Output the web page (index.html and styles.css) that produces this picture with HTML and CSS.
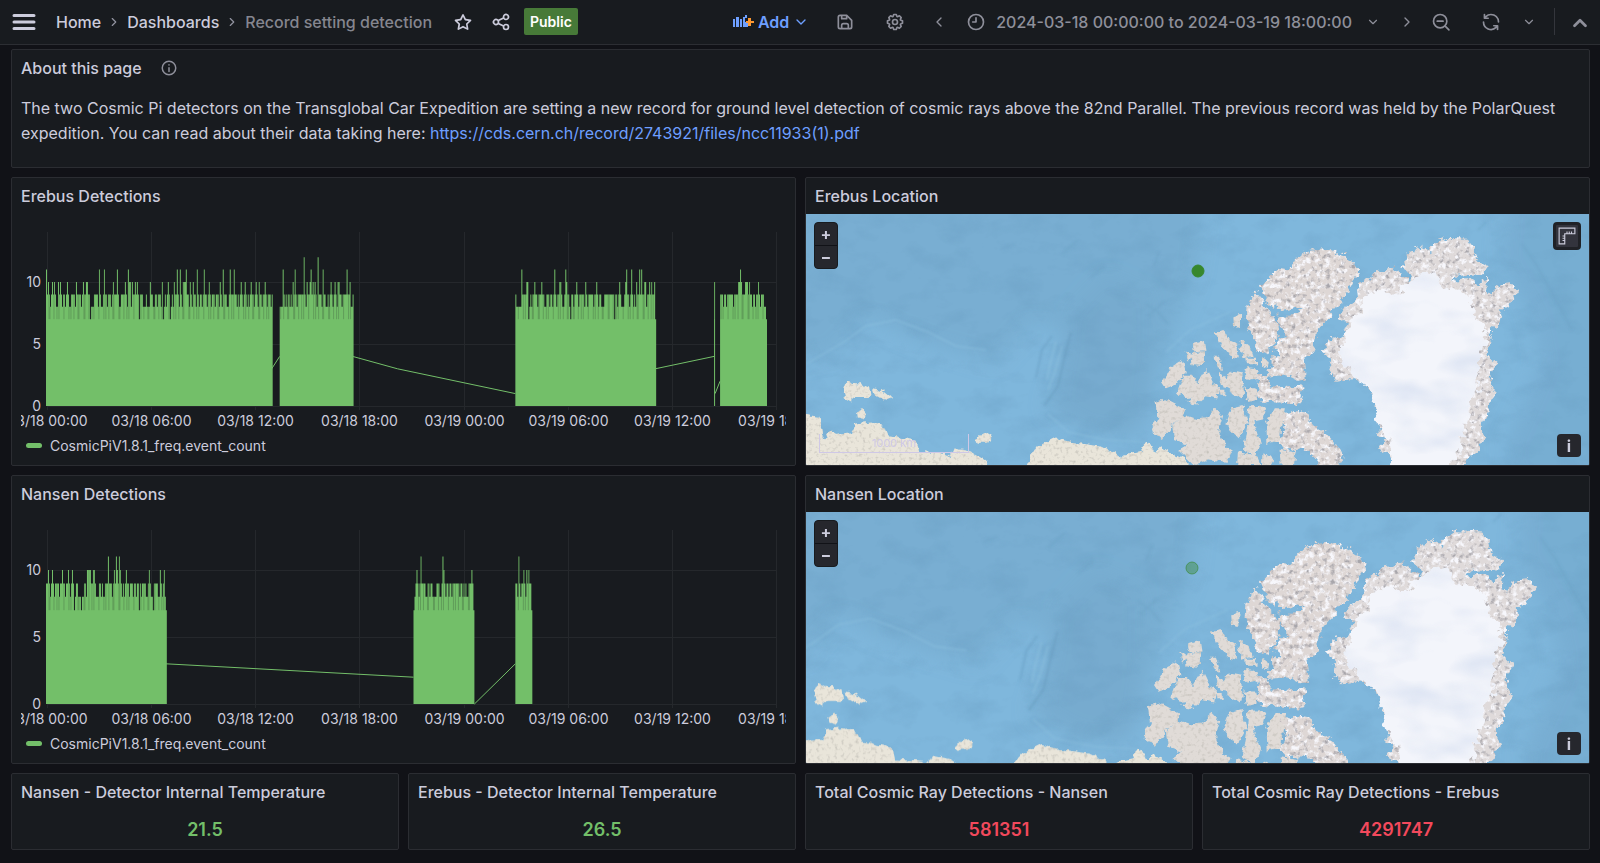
FILE: index.html
```html
<!DOCTYPE html>
<html lang="en">
<head>
    <meta charset="UTF-8">
    <meta name="viewport" content="width=device-width, initial-scale=1.0">
    <title>Record setting detection - Dashboards</title>
    <link rel="stylesheet" href="styles.css">
</head>
<body>

    <!-- Shared icons and map drawing -->
    <svg class="defs" width="0" height="0" aria-hidden="true">
        <defs>
            <symbol id="icon-right" viewBox="0 0 24 24"><path class="line" d="M9 6l6 6-6 6"/></symbol>
            <symbol id="icon-left" viewBox="0 0 24 24"><path class="line" d="M15 6l-6 6 6 6"/></symbol>
            <symbol id="icon-down" viewBox="0 0 24 24"><path class="line" d="M6 9l6 6 6-6"/></symbol>
            <symbol id="icon-up" viewBox="0 0 24 24"><path class="line thick" d="M6 16l6-6 6 6"/></symbol>
            <symbol id="icon-info" viewBox="0 0 24 24"><circle class="line" cx="12" cy="12" r="9"/><path class="line" d="M12 11.500v5M12 7.500v.6"/></symbol>

            <filter id="coast" x="0" y="-10" width="783" height="280" filterUnits="userSpaceOnUse" color-interpolation-filters="sRGB">
                <feTurbulence type="fractalNoise" baseFrequency="0.16" numOctaves="2" seed="4" result="wobble"/>
                <feDisplacementMap in="SourceGraphic" in2="wobble" scale="7" xChannelSelector="R" yChannelSelector="G" result="land"/>
                <feTurbulence type="fractalNoise" baseFrequency="0.3" numOctaves="2" seed="9"/>
                <feColorMatrix values="0 0 0 0 .74  0 0 0 0 .73  0 0 0 0 .70  0 2 0 0 -1.050" result="grain"/>
                <feComposite in="grain" in2="land" operator="in" result="shade"/>
                <feMerge><feMergeNode in="land"/><feMergeNode in="shade"/></feMerge>
            </filter>
            <filter id="rock" x="0" y="-10" width="783" height="280" filterUnits="userSpaceOnUse" color-interpolation-filters="sRGB">
                <feTurbulence type="fractalNoise" baseFrequency="0.16" numOctaves="3" seed="7" result="wobble"/>
                <feDisplacementMap in="SourceGraphic" in2="wobble" scale="10" xChannelSelector="R" yChannelSelector="G" result="land"/>
                <feTurbulence type="fractalNoise" baseFrequency="0.2" numOctaves="3" seed="2" result="noise"/>
                <feColorMatrix in="noise" values="0 0 0 0 .66  0 0 0 0 .65  0 0 0 0 .67  0 3.500 0 0 -1.900" result="dark"/>
                <feColorMatrix in="noise" values="0 0 0 0 .97  0 0 0 0 .97  0 0 0 0 .99  4 0 0 0 -1.900" result="snow"/>
                <feComposite in="snow" in2="land" operator="in" result="snowland"/>
                <feComposite in="dark" in2="land" operator="in" result="darkland"/>
                <feMerge><feMergeNode in="land"/><feMergeNode in="snowland"/><feMergeNode in="darkland"/></feMerge>
            </filter>
            <filter id="icecap" x="400" y="-10" width="383" height="280" filterUnits="userSpaceOnUse" color-interpolation-filters="sRGB">
                <feTurbulence type="fractalNoise" baseFrequency="0.12" numOctaves="3" seed="3" result="wobble"/>
                <feDisplacementMap in="SourceGraphic" in2="wobble" scale="14" xChannelSelector="R" yChannelSelector="G" result="ice"/>
                <feTurbulence type="fractalNoise" baseFrequency="0.015 0.03" numOctaves="3" seed="5"/>
                <feColorMatrix values="0 0 0 0 .86  0 0 0 0 .89  0 0 0 0 .95  0 2.400 0 0 -1.050" result="haze"/>
                <feComposite in="haze" in2="ice" operator="in" result="shade"/>
                <feMerge><feMergeNode in="ice"/><feMergeNode in="shade"/></feMerge>
            </filter>
            <filter id="seabed" x="-20" y="-20" width="823" height="300" filterUnits="userSpaceOnUse" color-interpolation-filters="sRGB">
                <feTurbulence type="fractalNoise" baseFrequency="0.03 0.05" numOctaves="4" seed="11"/>
                <feColorMatrix values="0 0 0 0 .40  0 0 0 0 .60  0 0 0 0 .74  0 1.600 0 0 -.75"/>
                <feComposite in2="SourceGraphic" operator="in"/>
            </filter>
            <filter id="soft" x="-30%" y="-30%" width="160%" height="160%"><feGaussianBlur stdDeviation="9"/></filter>
            <filter id="softline" x="-30%" y="-30%" width="160%" height="160%"><feGaussianBlur stdDeviation="1"/></filter>

            <g id="arctic">
                <rect x="-10" y="-10" width="803" height="280" fill="#7fb7dc"/>
                <g filter="url(#soft)" fill="#77abcf">
                    <path d="M-20-20H400L390 60 355 150 335 200 325 222 285 220 240 195 265 120 225 110 190 150 120 130 60 104 30 140-20 150Z" opacity=".75"/>
                    <path d="M262 100L300 60 345 80 345 190 330 220 280 215 245 195Z"/>
                    <path d="M700-20H803V270H705L700 230 735 150 725 100 695 50Z" opacity=".8"/>
                </g>
                <rect x="-10" y="-10" width="803" height="280" fill="#000" filter="url(#seabed)" opacity=".4"/>
                <g filter="url(#softline)" fill="none" stroke-width="2">
                    <path d="M0 150L38 128 60 112 90 106 122 118 150 132 180 136" stroke="#8bc0e0" opacity=".5"/>
                    <path d="M265 118L257 150 252 172 238 192" stroke="#6599bc" opacity=".5"/>
                    <path d="M246 122L236 136 230 164" stroke="#6599bc" opacity=".4"/>
                    <path d="M250 128L244 150 241 166M256 132L249 158 242 176" stroke="#8fc3e2" opacity=".5"/>
                    <path d="M340 90L352 98 362 110M342 102l16-14M256 40l16-14M284 64l14-12M195 34l14-4M348 52l5-14" stroke="#6c9fc2" opacity=".4"/>
                    <path d="M242 200L262 218 300 226 340 228M360 138l24-22 40-18" stroke="#8bc0e0" opacity=".5"/>
                    <path d="M716 30l14 20 20 36 16 30M680 8l-8 8" stroke="#6c9fc2" opacity=".4"/>
                </g>

                <!-- Siberian and Alaskan coast -->
                <g filter="url(#coast)" fill="#e9e5da" stroke="#e9e5da" stroke-width="6">
                    <g transform="translate(-5 -43) scale(.3333)">
                        <path d="M-20 730L50 740 60 790 70 812 90 780 100 795 155 790 165 760 210 755 250 770 260 795 345 812 352 845 430 852 448 862 460 835 510 845 550 870 570 900H-20Z"/>
                        <path d="M130 660L140 632 160 640 180 640 205 650 208 675 165 675 150 688 135 680Z"/>
                        <path d="M220 656L240 660 265 680 250 686 225 672Z"/>
                        <path d="M168 722l15-7 12 15-5 12-20-5z"/>
                        <path d="M530 800L550 788 567 800 560 812 535 812Z"/>
                        <path d="M670 900L690 860 710 830 765 803 810 815 900 830 940 850 960 865 1000 850 1035 845 1045 820 1060 850 1090 838 1150 865 1175 900Z"/>
                    </g>
                </g>

                <!-- Canadian islands -->
                <g filter="url(#coast)" fill="#e0dbd7" stroke="#e0dbd7" stroke-width="6">
                    <g transform="translate(323 -4) scale(.3333)">
                        <path d="M316 322l14-4v32l-12-4zM262 370L285 366 300 395 322 405 326 442 305 437 275 400ZM335 393L355 403 367 435 343 442ZM355 446h26v14h-24zM402 450l14 8-2 14-12-4zM260 443l8 0 10 32-8-2zM195 405L225 396 229 420 198 424ZM190 434L222 428 222 462 193 460ZM173 430l12 10-6 8z"/>
                        <path d="M100 517L130 475 160 455 167 485 140 520 110 532Z"/>
                        <path d="M148 547L165 500 187 500 205 525 232 483 250 520 267 530 263 562 230 555 195 582 178 572 198 555 170 558Z"/>
                        <path d="M273 488L290 513 310 488 337 493 342 552 315 558 303 532 283 530ZM353 538L377 538 382 566 360 572ZM350 478L378 480 384 500 358 507ZM272 542h14v12h-12z"/>
                        <path d="M83 578L110 570 167 600 160 617 130 642 100 687 70 662 88 625Z"/>
                        <path d="M133 650L165 618 200 630 233 625 262 600 276 618 265 660 280 700 310 722 290 752 240 745 195 762 153 722 180 702 138 687Z"/>
                        <path d="M293 640L310 598 342 590 350 640 330 678 308 662ZM363 592L409 590 402 625 373 632 376 655 392 700 375 737 348 717 360 650ZM415 640L438 598 464 598 455 640 450 690 418 697Z"/>
                        <path d="M330 728l27 5v34h-30zM363 738l14-6 14 33h-30zM403 735l29 15-10 17h-20zM455 723L497 730 492 765 458 765Z"/>
                        <path d="M-20 740L40 728 50 700 65 727 85 732 100 716 150 746 180 780H-20Z" fill="#e9e5da" stroke="#e9e5da"/>
                    </g>
                </g>
                <g filter="url(#rock)" fill="#ded7d5" stroke="#ded7d5" stroke-width="6">
                    <g transform="translate(323 -4) scale(.3333)">
                        <path d="M400 230L430 200 455 178 485 185 500 150 540 125 600 120 640 135 665 155 690 185 665 215 650 245 620 290 590 325 560 360 560 385 550 425 520 440 527 502 500 506 470 492 420 497 415 480 435 470 433 440 455 445 440 420 450 390 480 380 450 345 450 320 485 320 520 300 500 290 460 300 430 285 410 265Z"/>
                        <path d="M356 290L378 248 400 275 410 300 440 330 445 370 435 400 410 432 385 417 375 375 353 335Z"/>
                        <path d="M383 498L410 498 425 533 470 530 517 535 513 577 430 574 388 567 395 540Z"/>
                        <path d="M460 615L500 603 535 608 545 640 590 672 620 706 637 740 625 770 580 770 555 740 520 710 470 725 453 690 470 650Z"/>
                    </g>
                </g>

                <!-- Greenland -->
                <g filter="url(#rock)" fill="#dfdada" stroke="#dfdada" stroke-width="4">
                    <g transform="translate(493 -4) scale(.3333)">
                        <path d="M72 425L95 390 135 378 150 340 120 322 140 290 185 262 182 225 215 200 240 188 280 178 300 185 325 215 345 200 312 175 330 130 365 112 395 130 400 98 440 85 500 88 520 115 530 150 558 165 555 190 470 195 455 215 500 210 545 225 562 205 560 245 575 255 610 225 640 222 655 245 630 285 600 300 608 320 590 350 578 345 575 400 560 440 590 465 570 500 575 520 590 550 570 575 565 610 545 640 555 690 535 700 540 720 510 740 470 790 275 790 280 740 245 720 250 690 280 690 240 670 245 640 235 600 225 560 200 515 160 505 110 510 90 480 100 450Z"/>
                    </g>
                </g>
                <g filter="url(#icecap)" fill="#f3f5fb" stroke="#f3f5fb" stroke-width="14" stroke-linejoin="round">
                    <g transform="translate(493 -4) scale(.3333)">
                        <path d="M345 215L370 195 410 205 440 240 500 260 520 310 540 340 560 375 540 430 525 480 535 530 500 590 490 650 480 710 430 790H290L280 700 240 620 228 560 208 520 180 500 138 460 130 420 145 375 160 335 200 310 190 270 240 250 300 255 340 220Z"/>
                    </g>
                </g>
            </g>
        </defs>
    </svg>

    <!-- Top navigation -->
    <header class="topbar">
        <button class="icon-button menu" aria-label="Open menu">
            <svg width="24" height="24" viewBox="0 0 24 24"><path class="line thick" d="M2 5.500h20M2 12h20M2 18.500h20"/></svg>
        </button>
        <nav class="breadcrumbs" aria-label="Breadcrumbs">
            <a href="#">Home</a>
            <svg class="sep" width="14" height="14"><use href="#icon-right"/></svg>
            <a href="#">Dashboards</a>
            <svg class="sep" width="14" height="14"><use href="#icon-right"/></svg>
            <span class="current">Record setting detection</span>
        </nav>
        <button class="icon-button light" aria-label="Mark as favorite">
            <svg width="20" height="20" viewBox="0 0 24 24"><path d="M22,9.67A1,1,0,0,0,21.14,9l-5.69-.83L12.9,3a1,1,0,0,0-1.8,0L8.55,8.16,2.86,9a1,1,0,0,0-.81.68,1,1,0,0,0,.25,1l4.13,4-1,5.68A1,1,0,0,0,6.9,21.44L12,18.77l5.1,2.67a.93.93,0,0,0,.46.12,1,1,0,0,0,.59-.19,1,1,0,0,0,.4-1l-1-5.68,4.13-4A1,1,0,0,0,22,9.67Zm-6.15,4a1,1,0,0,0-.29.88l.72,4.2-3.76-2a1.06,1.06,0,0,0-.94,0l-3.76,2,.72-4.2a1,1,0,0,0-.29-.88l-3-3,4.21-.61a1,1,0,0,0,.76-.55L12,5.7l1.88,3.82a1,1,0,0,0,.76.55l4.21.61Z"/></svg>
        </button>
        <button class="icon-button light" aria-label="Share dashboard">
            <svg width="20" height="20" viewBox="0 0 24 24"><path d="M18,14a4,4,0,0,0-3.08,1.48l-5.1-2.35a3.64,3.64,0,0,0,0-2.26l5.1-2.35A4,4,0,1,0,14,6a4.17,4.17,0,0,0,.07.71L8.79,9.14a4,4,0,1,0,0,5.72l5.28,2.43A4.17,4.17,0,0,0,14,18a4,4,0,1,0,4-4ZM18,4a2,2,0,1,1-2,2A2,2,0,0,1,18,4ZM6,14a2,2,0,1,1,2-2A2,2,0,0,1,6,14Zm12,6a2,2,0,1,1,2-2A2,2,0,0,1,18,20Z"/></svg>
        </button>
        <span class="badge">Public</span>

        <div class="toolbar">
            <button class="add">
                <svg width="22" height="18" viewBox="0 0 22 18"><path fill="#6e9fff" d="M1 6h2v8H1zM4 4h3v10H4zM8 6h2v8H8zM11 4h2v10h-2zM13 9h3v5h-3zM13 2h2v3h-2z"/><path fill="#ff9830" d="M16 5h3v3h3v2h-3v3h-3v-3h-2V8h2z"/></svg>
                Add
                <svg width="16" height="16"><use href="#icon-down"/></svg>
            </button>
            <button class="icon-button" aria-label="Save dashboard">
                <svg width="20" height="20" viewBox="0 0 24 24"><path d="M20.71,9.29l-6-6a1,1,0,0,0-.32-.21A1.09,1.09,0,0,0,14,3H6A3,3,0,0,0,3,6V18a3,3,0,0,0,3,3H18a3,3,0,0,0,3-3V10A1,1,0,0,0,20.71,9.29ZM9,5h4V7H9Zm6,14H9V16a1,1,0,0,1,1-1h4a1,1,0,0,1,1,1Zm4-1a1,1,0,0,1-1,1H17V16a3,3,0,0,0-3-3H10a3,3,0,0,0-3,3v3H6a1,1,0,0,1-1-1V6A1,1,0,0,1,6,5H7V8A1,1,0,0,0,8,9h6a1,1,0,0,0,1-1V6.41l4,4Z"/></svg>
            </button>
            <button class="icon-button" aria-label="Dashboard settings">
                <svg width="20" height="20" viewBox="0 0 24 24"><path d="M21.32,9.55l-1.89-.63.89-1.78A1,1,0,0,0,20.13,6L18,3.87a1,1,0,0,0-1.15-.19l-1.78.89-.63-1.89A1,1,0,0,0,13.5,2h-3a1,1,0,0,0-.95.68L8.92,4.57,7.14,3.68A1,1,0,0,0,6,3.87L3.87,6a1,1,0,0,0-.19,1.15l.89,1.78-1.89.63A1,1,0,0,0,2,10.5v3a1,1,0,0,0,.68.95l1.89.63-.89,1.78A1,1,0,0,0,3.87,18L6,20.13a1,1,0,0,0,1.15.19l1.78-.89.63,1.89a1,1,0,0,0,.95.68h3a1,1,0,0,0,.95-.68l.63-1.89,1.78.89A1,1,0,0,0,18,20.13L20.13,18a1,1,0,0,0,.19-1.15l-.89-1.78,1.89-.63A1,1,0,0,0,22,13.5v-3A1,1,0,0,0,21.32,9.55ZM20,12.78l-1.2.4A2,2,0,0,0,17.64,16l.57,1.14-1.1,1.1L16,17.64a2,2,0,0,0-2.79,1.16l-.4,1.2H11.22l-.4-1.2A2,2,0,0,0,8,17.64l-1.14.57-1.1-1.1L6.36,16A2,2,0,0,0,5.2,13.18L4,12.78V11.22l1.2-.4A2,2,0,0,0,6.36,8L5.79,6.89l1.1-1.1L8,6.36A2,2,0,0,0,10.82,5.2l.4-1.2h1.56l.4,1.2A2,2,0,0,0,16,6.36l1.14-.57,1.1,1.1L17.64,8a2,2,0,0,0,1.16,2.79l1.2.4ZM12,8a4,4,0,1,0,4,4A4,4,0,0,0,12,8Zm0,6a2,2,0,1,1,2-2A2,2,0,0,1,12,14Z"/></svg>
            </button>
            <div class="time-controls">
                <button class="icon-button narrow" aria-label="Move time range backwards"><svg width="16" height="16"><use href="#icon-left"/></svg></button>
                <button class="time-range">
                    <svg width="20" height="20" viewBox="0 0 24 24"><circle class="line" cx="12" cy="12" r="9"/><path class="line" d="M12 7v5H8"/></svg>
                    <span>2024-03-18 00:00:00 to 2024-03-19 18:00:00</span>
                    <svg class="caret" width="14" height="14"><use href="#icon-down"/></svg>
                </button>
                <button class="icon-button narrow" aria-label="Move time range forwards"><svg width="16" height="16"><use href="#icon-right"/></svg></button>
                <button class="icon-button" aria-label="Zoom out time range">
                    <svg width="20" height="20" viewBox="0 0 24 24"><circle class="line" cx="11" cy="11" r="8"/><path class="line" d="M17 17l4.500 4.500M7.500 11h7"/></svg>
                </button>
            </div>
            <div class="refresh-controls">
                <button class="icon-button" aria-label="Refresh dashboard">
                    <svg width="20" height="20" viewBox="0 0 24 24"><path d="M19.91,15.51H15.38a1,1,0,0,0,0,2h2.4A8,8,0,0,1,4,12a1,1,0,0,0-2,0,10,10,0,0,0,16.88,7.23V21a1,1,0,0,0,2,0V16.5A1,1,0,0,0,19.91,15.51ZM12,2A10,10,0,0,0,5.12,4.77V3a1,1,0,0,0-2,0V7.5a1,1,0,0,0,1,1h4.5a1,1,0,0,0,0-2H6.22A8,8,0,0,1,20,12a1,1,0,0,0,2,0A10,10,0,0,0,12,2Z"/></svg>
                </button>
                <button class="icon-button narrow" aria-label="Auto refresh interval"><svg width="14" height="14"><use href="#icon-down"/></svg></button>
            </div>
            <span class="divider"></span>
            <button class="icon-button narrow" aria-label="Hide top bar"><svg width="22" height="22"><use href="#icon-up"/></svg></button>
        </div>
    </header>

    <main class="dashboard">

        <section class="panel about">
            <h2>About this page <svg class="hint" width="18" height="18"><use href="#icon-info"/></svg></h2>
            <p>The two Cosmic Pi detectors on the Transglobal Car Expedition are setting a new record for ground level detection of cosmic rays above the 82nd Parallel. The previous record was held by the PolarQuest expedition. You can read about their data taking here: <a href="https://cds.cern.ch/record/2743921/files/ncc11933(1).pdf">https://cds.cern.ch/record/2743921/files/ncc11933(1).pdf</a></p>
        </section>

        <section class="panel half">
            <h2>Erebus Detections</h2>
            <svg class="chart" id="erebusChart" role="img" aria-label="Erebus detections over time"></svg>
            <div class="legend"><span class="swatch"></span><button>CosmicPiV1.8.1_freq.event_count</button></div>
        </section>

        <section class="panel half">
            <h2>Erebus Location</h2>
            <div class="map">
                <svg class="map-canvas" viewBox="0 0 783 251" preserveAspectRatio="xMidYMid slice" role="img" aria-label="Map of the Arctic with the Erebus position">
                    <use href="#arctic"/>
                    <circle cx="392" cy="57" r="6" fill="#37872d" stroke="#37872d"/>
                </svg>
                <div class="map-zoom">
                    <button aria-label="Zoom in">+</button>
                    <button aria-label="Zoom out">−</button>
                </div>
                <button class="map-measure" aria-label="Measure">
                    <svg width="18" height="18" viewBox="0 0 16 16"><path d="M1 1h14v5H6v9H1zM8 6V4M10 6V4M12 6V4M6 8H4M6 10H4M6 12H4"/></svg>
                </button>
                <div class="map-scale">1000 km</div>
                <button class="map-info" aria-label="Attributions">i</button>
            </div>
        </section>

        <section class="panel half">
            <h2>Nansen Detections</h2>
            <svg class="chart" id="nansenChart" role="img" aria-label="Nansen detections over time"></svg>
            <div class="legend"><span class="swatch"></span><button>CosmicPiV1.8.1_freq.event_count</button></div>
        </section>

        <section class="panel half">
            <h2>Nansen Location</h2>
            <div class="map">
                <svg class="map-canvas" viewBox="0 0 783 251" preserveAspectRatio="xMidYMid slice" role="img" aria-label="Map of the Arctic with the Nansen position">
                    <use href="#arctic" transform="translate(-32 -7) scale(1.07)"/>
                    <circle cx="386" cy="56" r="6" fill="#37872d" fill-opacity=".4" stroke="#37872d" stroke-opacity=".6"/>
                </svg>
                <div class="map-zoom">
                    <button aria-label="Zoom in">+</button>
                    <button aria-label="Zoom out">−</button>
                </div>
                <button class="map-info" aria-label="Attributions">i</button>
            </div>
        </section>

        <section class="panel">
            <h2>Nansen - Detector Internal Temperature</h2>
            <div class="stat green">21.5</div>
        </section>
        <section class="panel">
            <h2>Erebus - Detector Internal Temperature</h2>
            <div class="stat green">26.5</div>
        </section>
        <section class="panel">
            <h2>Total Cosmic Ray Detections - Nansen</h2>
            <div class="stat red">581351</div>
        </section>
        <section class="panel">
            <h2>Total Cosmic Ray Detections - Erebus</h2>
            <div class="stat red">4291747</div>
        </section>

    </main>

    <script src="script.js"></script>
</body>
</html>
```
FILE: styles.css
```css
* {
    box-sizing: border-box;
}
body {
    margin: 0;
    background: #111217;
    color: #ccccdc;
    font-family: Inter, "Liberation Sans", sans-serif;
    font-size: 16px;
}
button {
    display: flex;
    align-items: center;
    justify-content: center;
    padding: 0;
    border: none;
    background: none;
    color: inherit;
    font: inherit;
    cursor: pointer;
}
svg {
    display: block;
    flex: none;
    fill: currentColor;
}
.defs {
    position: absolute;
}
.line {
    fill: none;
    stroke: currentColor;
    stroke-width: 2;
    stroke-linecap: round;
    stroke-linejoin: round;
}
.thick {
    stroke-width: 3;
}

/* Top bar */
.topbar {
    display: flex;
    align-items: center;
    height: 45px;
    padding: 0 7px 1px 12px;
    background: #181b1f;
    border-bottom: 1px solid #2c2e33;
    white-space: nowrap;
}
.menu {
    margin-right: 20px;
}
.breadcrumbs {
    display: flex;
    align-items: center;
    gap: 6px;
    margin-right: 12px;
    font-weight: 500;
}
.breadcrumbs a {
    color: #ccccdc;
    text-decoration: none;
}
.sep {
    color: #9293a0;
}
.current {
    color: #85868f;
}
.icon-button {
    min-width: 38px;
    height: 36px;
    color: #8e8f9a;
}
.icon-button.light {
    color: #ccccdc;
}
.icon-button.menu {
    min-width: 24px;
    color: #ccccdc;
}
.icon-button.narrow {
    min-width: 26px;
}
.badge {
    margin-left: 4px;
    padding: 0 6px;
    border-radius: 2px;
    background: #477a38;
    color: #fff;
    font-size: 14px;
    font-weight: 600;
    line-height: 27px;
}
.toolbar {
    display: flex;
    align-items: center;
    gap: 12px;
    margin-left: auto;
}
.add {
    gap: 4px;
    padding: 0 5px;
    color: #6e9fff;
    font-weight: 600;
}
.time-controls {
    display: flex;
    align-items: center;
    gap: 2px;
}
.refresh-controls {
    display: flex;
    align-items: center;
    gap: 6px;
}
.time-range {
    gap: 10px;
    padding: 0 12px;
    color: #8e8f9a;
    font-weight: 500;
}
.caret {
    margin-left: 4px;
}
.divider {
    width: 1px;
    height: 27px;
    background: #34363c;
}

/* Panels */
.dashboard {
    display: grid;
    grid-template-columns: repeat(4, minmax(0, 1fr));
    gap: 9px;
    padding: 4px 10px 14px 11px;
}
.panel {
    overflow: hidden;
    border: 1px solid #2b2d32;
    border-radius: 2px;
    background: #181b1f;
}
.half {
    grid-column: span 2;
}
.about {
    grid-column: 1 / -1;
}
.panel h2 {
    display: flex;
    align-items: center;
    gap: 18px;
    height: 36px;
    margin: 0;
    padding: 0 9px;
    font-size: 16px;
    font-weight: 500;
    white-space: nowrap;
}
.hint {
    color: #8e8f9a;
}
.about p {
    margin: 0;
    padding: 10px 9px 21px;
    line-height: 25px;
}
.about a {
    color: #6e9fff;
    text-decoration: none;
}

/* Time series */
.chart {
    width: calc(100% - 18px);
    height: 218px;
    margin: 0 9px;
    overflow: hidden;
}
.chart text {
    fill: #ccccdc;
    font-size: 14px;
}
.chart .grid {
    fill: none;
    stroke: #25282c;
}
.chart .area {
    fill: #73bf69;
}
.chart .gap {
    fill: none;
    stroke: #73bf69;
}
.chart .dips {
    fill: none;
    stroke: #181b1f;
    opacity: 0.2;
}
.legend {
    display: flex;
    align-items: center;
    gap: 8px;
    height: 33px;
    padding: 0 14px 7px;
    font-size: 14px;
}
.swatch {
    width: 16px;
    height: 5px;
    border-radius: 3px;
    background: #73bf69;
}

/* Maps */
.map {
    position: relative;
    height: 251px;
}
.map-canvas {
    width: 100%;
    height: 100%;
}
.map button {
    background: #26272d;
    color: #ccccdc;
    font-weight: 700;
}
.map-zoom {
    position: absolute;
    top: 8px;
    left: 8px;
    display: grid;
    gap: 1px;
    overflow: hidden;
    border: 1px solid #181b1f;
    border-radius: 4px;
    background: #111217;
}
.map-zoom button {
    width: 22px;
    height: 22px;
}
.map .map-measure {
    position: absolute;
    top: 8px;
    right: 8px;
    width: 28px;
    height: 28px;
    border: 3px solid #202227;
    border-radius: 4px;
    background: #33343d;
}
.map-measure path {
    fill: none;
    stroke: #ccccdc;
}
.map-scale {
    position: absolute;
    bottom: 12px;
    left: 13px;
    width: 150px;
    height: 19px;
    border: 1px solid #cfc8e6;
    border-top: none;
    color: #cfc8e6;
    font-size: 11px;
    line-height: 19px;
    text-align: center;
}
.map-info {
    position: absolute;
    right: 8px;
    bottom: 8px;
    width: 24px;
    height: 23px;
    border-radius: 4px;
}

/* Stats */
.stat {
    font-size: 18px;
    font-weight: 600;
    line-height: 39px;
    text-align: center;
}
.green {
    color: #73bf69;
}
.red {
    color: #f2495c;
}
```
FILE: script.js
```js
// The time range is split in 730 buckets, 2024-03-18 00:00 to 2024-03-19 18:00
const BUCKETS = 730;
const TICKS = ["03/18 00:00", "03/18 06:00", "03/18 12:00", "03/18 18:00", "03/19 00:00", "03/19 06:00", "03/19 12:00", "03/19 18:00"];

// Peak count per bucket is 9 unless it is listed under another level
const erebus = {
    unit: 12.4,
    zero: 192,
    runs: [[-1, 225], [233, 306], [469, 609], [668, 668], [674, 720]],
    levels: {
        12: [257, 271],
        11: [-1, 52, 57, 70, 81, 130, 133, 139, 150, 157, 176, 183, 187, 236, 248, 264, 276, 300, 475, 508, 519, 580, 585, 593, 595, 694],
        10: [1, 5, 7, 11, 13, 20, 29, 36, 39, 40, 66, 78, 82, 83, 85, 88, 90, 103, 115, 121, 127, 136, 137, 138, 143, 146, 162, 173, 194, 198, 204, 209, 212, 218, 246, 260, 263, 266, 268, 284, 288, 291, 292, 303, 480, 481, 488, 495, 513, 514, 520, 530, 539, 550, 573, 579, 590, 598, 599, 603, 605, 608, 668, 692, 693, 695, 699, 700, 701, 703, 712],
        8: [3, 9, 10, 15, 18, 22, 23, 28, 34, 44, 45, 46, 51, 54, 55, 60, 64, 72, 73, 80, 84, 96, 97, 98, 100, 101, 102, 106, 107, 110, 114, 117, 119, 124, 126, 132, 135, 142, 145, 149, 152, 155, 160, 164, 168, 172, 175, 180, 181, 190, 192, 196, 200, 202, 207, 211, 215, 220, 224, 233, 234, 235, 238, 240, 243, 245, 250, 259, 270, 275, 279, 280, 282, 286, 290, 295, 304, 305, 470, 471, 472, 473, 474, 483, 485, 491, 498, 499, 503, 506, 510, 516, 517, 523, 527, 532, 538, 541, 547, 552, 555, 556, 557, 571, 575, 576, 577, 583, 587, 589, 600, 677, 680, 687, 706, 709, 714, 718, 719],
        7: [43, 92, 116, 123, 232, 482, 524, 568, 609, 720]
    },
    lines: [[[225, 3], [233, 4]], [[306, 4], [351, 3], [469, 1]], [[609, 3], [668, 4]], [[669, 1], [674, 2]]]
};

const nansen = {
    unit: 13.4,
    zero: 192,
    runs: [[-1, 119], [367, 427], [469, 485]],
    levels: {
        11: [61, 69, 72, 374, 396, 472],
        10: [1, 5, 15, 21, 25, 40, 41, 42, 43, 46, 47, 67, 70, 73, 79, 102, 113, 117, 370, 397, 425, 477, 480, 482],
        8: [3, 7, 12, 18, 23, 28, 31, 32, 33, 35, 36, 39, 49, 50, 51, 54, 56, 57, 65, 75, 77, 82, 86, 89, 94, 99, 100, 104, 105, 111, 112, 115, 118, 368, 372, 379, 380, 383, 386, 387, 388, 389, 393, 394, 399, 402, 405, 413, 416, 418, 420, 421, 471, 474, 479],
        7: [27, 34, 92, 106, 119, 367, 427, 485]
    },
    lines: [[[119, 3], [367, 2]], [[428, 0], [469, 3]]]
};

function peakAt(data, bucket) {
    for (const level in data.levels) {
        if (data.levels[level].includes(bucket)) return Number(level);
    }
    return 9;
}

function drawChart(id, data) {
    const svg = document.getElementById(id);
    const left = 26;
    const top = 18;
    const right = svg.clientWidth - 10;
    const x = bucket => left + bucket * (right - left) / BUCKETS;
    const y = value => data.zero - value * data.unit;
    let grid = "";
    let labels = "";
    let area = "";
    let gaps = "";
    let dips = "";

    TICKS.forEach((tick, i) => {
        const tx = Math.round(left + i * (right - left) / (TICKS.length - 1)) + 0.5;
        grid += `M${tx} ${top}V${data.zero + 4}`;
        labels += `<text x="${tx}" y="212" text-anchor="middle">${tick}</text>`;
    });

    [0, 5, 10].forEach(value => {
        const ty = Math.round(y(value)) + 0.5;
        grid += `M${left} ${ty}H${right}`;
        labels += `<text x="20" y="${ty + 4}" text-anchor="end">${value}</text>`;
    });

    data.runs.forEach(([from, to]) => {
        area += `M${x(from)} ${data.zero}`;
        for (let b = from; b <= to; b++) {
            area += `V${y(peakAt(data, b))}H${x(b + 1)}`;
            if (b % 5 === 2 || b % 7 === 3) dips += `M${x(b)} ${y(peakAt(data, b))}V${y(7)}`;
        }
        area += `V${data.zero}Z`;
    });

    data.lines.forEach(points => {
        gaps += "M" + points.map(([b, v]) => `${x(b)} ${y(v)}`).join("L");
    });

    svg.innerHTML = `<path class="grid" d="${grid}"/><path class="gap" d="${gaps}"/><path class="area" d="${area}"/><path class="dips" d="${dips}"/>${labels}`;
}

function drawCharts() {
    drawChart("erebusChart", erebus);
    drawChart("nansenChart", nansen);
}

drawCharts();
window.addEventListener("resize", drawCharts);
```
